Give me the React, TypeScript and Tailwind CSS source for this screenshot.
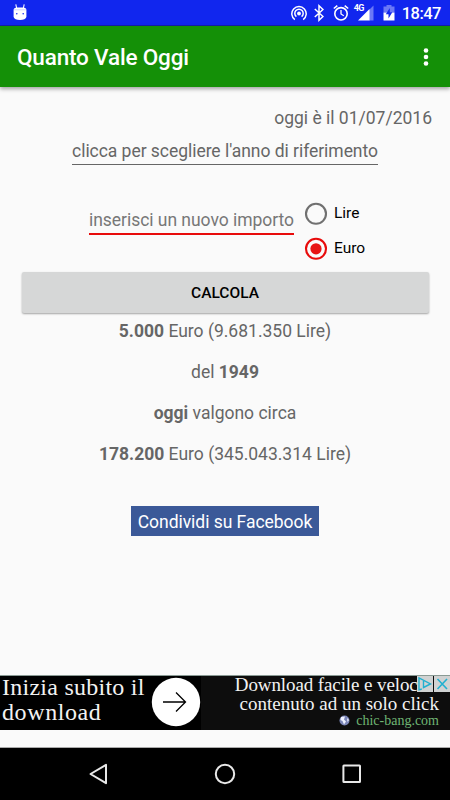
import { useState } from "react";

function StatusBar() {
  return (
    <div className="flex h-[26px] items-center border-b border-[#1420a8] bg-[#1126ee] pt-px pr-[9px] pl-[13px] text-white">
      <svg className="-mt-0.5" width="14" height="18" viewBox="0 0 14 18" fill="white">
        <path d="M.6 7Q.6 4.500 4 4.500H10Q13.400 4.500 13.400 7V14Q12.500 17 7 17Q1.500 17 .6 14Z" />
        <path d="M3.600 5L2.800 1.300M10.400 5L11.200 1.300" stroke="white" strokeWidth="1.100" />
        <path d="M1 6.800H13" stroke="#c4c9fc" strokeWidth=".8" />
        <circle cx="3.800" cy="10.800" r=".8" fill="#1126ee" />
        <circle cx="10.200" cy="10.800" r=".8" fill="#1126ee" />
      </svg>
      <svg className="ml-auto" width="16" height="18" viewBox="0 0 16 18" fill="none" stroke="white" strokeWidth="1.500">
        <circle cx="8" cy="9.500" r="1.900" fill="white" stroke="none" />
        <path d="M5.400 12.700A4.200 4.200 0 1 1 10.600 12.700" />
        <path d="M3.800 15.600A7.200 7.200 0 1 1 12.200 15.600" />
      </svg>
      <svg className="ml-[7px]" width="10" height="18" viewBox="0 0 10 18" fill="none" stroke="white" strokeWidth="1.500">
        <path d="M.8 5L9 12.500L5 16.200V1.800L9 5.500L.8 13" />
      </svg>
      <svg className="ml-[9px]" width="16" height="18" viewBox="0 0 16 18" fill="none" stroke="white" strokeWidth="1.600">
        <circle cx="8" cy="9.800" r="6.200" />
        <path d="M.8 4.500L4.300 1.600M15.200 4.500L11.700 1.600" />
        <path d="M8 6V10L10.800 11.800" strokeWidth="1.300" />
      </svg>
      <div className="relative ml-[5px] h-[18px] w-[20px]">
        <svg width="20" height="18" viewBox="0 0 20 18">
          <path d="M19.500 1.500V16.500H15V6Z" fill="#6b78f6" />
          <path d="M4 16.500L15.500 5V16.500Z" fill="white" />
        </svg>
        <span className="absolute top-0 left-0 text-[9px] leading-[9px] font-bold tracking-[-0.6px]">4G</span>
      </div>
      <svg className="ml-[9px]" width="12" height="18" viewBox="0 0 12 18">
        <path d="M.5 2.500H3.500V1H8.500V2.500H11.500V8.500H.5Z" fill="#6b78f6" />
        <path d="M.5 8.500H11.500V16.500H.5Z" fill="white" />
        <path d="M6.800 4L2.800 10.200H5.500V14.500L9.300 8.300H6.800Z" fill="#1126ee" />
      </svg>
      <span className="ml-[7px] pt-px text-[16.500px] leading-[18px] font-medium tracking-[-0.5px]">18:47</span>
    </div>
  );
}

function AppBar() {
  return (
    <header className="flex h-[61px] items-center justify-between bg-[#149007] pt-0.5 pr-[21px] pl-[17px] text-white shadow-[0_2px_4px_rgba(0,0,0,0.35)]">
      <h1 className="text-[22.500px] font-medium tracking-[-0.17px]">Quanto Vale Oggi</h1>
      <svg className="-mt-0.5" width="6" height="20" viewBox="0 0 6 20" fill="white">
        <circle cx="3" cy="3.500" r="2.300" />
        <circle cx="3" cy="10" r="2.300" />
        <circle cx="3" cy="16.500" r="2.300" />
      </svg>
    </header>
  );
}

interface RadioProps {
  label: string;
  checked: boolean;
  onSelect: () => void;
}

function Radio({ label, checked, onSelect }: RadioProps) {
  return (
    <button
      role="radio"
      aria-checked={checked}
      onClick={onSelect}
      className="flex h-[35px] items-center gap-[6px] text-[15.500px] text-black"
    >
      <svg width="24" height="24" viewBox="0 0 24 24" fill="none">
        <circle cx="12" cy="11.800" r="10" stroke={checked ? "#e80b0b" : "#707070"} strokeWidth="2.100" />
        {checked && <circle cx="12" cy="11.800" r="5.600" fill="#e81414" />}
      </svg>
      <span className="pt-px">{label}</span>
    </button>
  );
}

function AdBanner() {
  return (
    <div className="relative flex h-[55px] border-t border-[#8a9a94] bg-black font-['Liberation_Serif',serif] text-[#f2f2f2]">
      <div className="-mt-px w-[144px] pl-[2px] text-[24px] leading-[25px] whitespace-nowrap">
        <div className="tracking-[0.25px]">Inizia subito il</div>
        <div className="tracking-[0.6px]">download</div>
      </div>
      <svg className="ml-[7px] mt-px shrink-0" width="50" height="50" viewBox="0 0 50 50">
        <circle cx="25" cy="25" r="24.200" fill="white" />
        <path d="M12 25H34.500M25 15.500L34.500 25L25 34.500" fill="none" stroke="black" strokeWidth="1.300" />
      </svg>
      <div className="flex-1 bg-[#0d0d0d] pr-[11px] text-right text-[19px] leading-[19px] whitespace-nowrap">
        <div className="-mt-px pr-[13px] tracking-[-0.1px]">Download facile e veloce</div>
        <div>contenuto ad un solo click</div>
        <div className="flex items-center justify-end gap-[6px] text-[14px] leading-[15px] text-[#6fb573]">
          <svg width="11" height="11" viewBox="0 0 11 11">
            <circle cx="5.500" cy="5.500" r="5" fill="#7b86b8" />
            <path d="M2 2L6 1.500L5 4.500L7 6.500L5 9.500L3.500 6L1.500 5ZM8 3L10 5L8.500 7Z" fill="#eef1ff" />
          </svg>
          chic-bang.com
        </div>
      </div>
      <div className="absolute top-0 right-0 flex h-[16px] gap-px">
        <svg className="bg-[#d0d2d2]" width="16" height="16" viewBox="0 0 16 16" fill="none" stroke="#20b0d0" strokeWidth="1.400">
          <path d="M4.800 13L2 13.800V2L13.500 8L6.500 11.500V5" />
        </svg>
        <svg className="bg-[#d0d2d2]" width="16" height="16" viewBox="0 0 16 16" fill="none" stroke="#20b0d0" strokeWidth="1.600">
          <path d="M3.500 3L13 13M13 3L3.500 13" />
        </svg>
      </div>
    </div>
  );
}

function NavBar() {
  return (
    <nav className="flex h-[52px] items-center justify-between bg-black pr-[88px] pl-[88px]">
      <svg width="20" height="22" viewBox="0 0 20 22" fill="none" stroke="#e8e8e8" strokeWidth="2">
        <path d="M18 1.800V20.200L2.500 11Z" strokeLinejoin="round" />
      </svg>
      <svg width="22" height="22" viewBox="0 0 22 22" fill="none" stroke="#e8e8e8" strokeWidth="2">
        <circle cx="11" cy="11" r="9.200" />
      </svg>
      <svg width="20" height="20" viewBox="0 0 20 20" fill="none" stroke="#e8e8e8" strokeWidth="2">
        <rect x="1.400" y="1.500" width="16.600" height="16.600" rx=".5" />
      </svg>
    </nav>
  );
}

export default function App() {
  const [currency, setCurrency] = useState("Euro");

  return (
    <div className="flex h-[800px] w-[450px] flex-col overflow-hidden bg-[#fafafa] font-['Roboto',sans-serif]">
      <StatusBar />
      <AppBar />

      <main className="flex flex-1 flex-col items-center text-[17.500px] text-[#666]">
        <p className="mt-[20px] mr-[18px] self-end leading-[22px]">oggi è il 01/07/2016</p>
        <div className="mt-[11px] h-[25px] border-b border-[#666] leading-[22px] tracking-[-0.04px]">
          clicca per scegliere l'anno di riferimento
        </div>

        {/* Amount and currency */}
        <div className="mt-[31px] flex w-full pl-[89px]">
          <div className="mt-[12px] h-[27px] w-[205px] border-b-2 border-[#e80b0b] leading-[24px] tracking-[-0.04px] whitespace-nowrap text-[#777]">
            inserisci un nuovo importo
          </div>
          <div className="ml-[10px] flex flex-col" role="radiogroup">
            <Radio label="Lire" checked={currency === "Lire"} onSelect={() => setCurrency("Lire")} />
            <Radio label="Euro" checked={currency === "Euro"} onSelect={() => setCurrency("Euro")} />
          </div>
        </div>

        <button className="mt-[6px] h-[41px] w-[407px] rounded-[2px] bg-[#d6d7d7] pt-0.5 text-[15.500px] font-medium text-black shadow-[0_1px_2px_rgba(0,0,0,0.35)]">
          CALCOLA
        </button>

        {/* Result */}
        <div className="mt-[7px] flex flex-col gap-[19px] text-center leading-[22px]">
          <p><b>5.000</b> Euro (9.681.350 Lire)</p>
          <p>del <b>1949</b></p>
          <p><b>oggi</b> valgono circa</p>
          <p><b>178.200</b> Euro (345.043.314 Lire)</p>
        </div>

        <button className="mt-[41px] h-[30px] w-[188px] bg-[#3b5998] pt-[3px] text-[17.500px] tracking-[-0.04px] whitespace-nowrap text-white">
          Condividi su Facebook
        </button>
      </main>

      <AdBanner />
      <div className="h-[18px] border-b border-[#aaa]" />
      <NavBar />
    </div>
  );
}
